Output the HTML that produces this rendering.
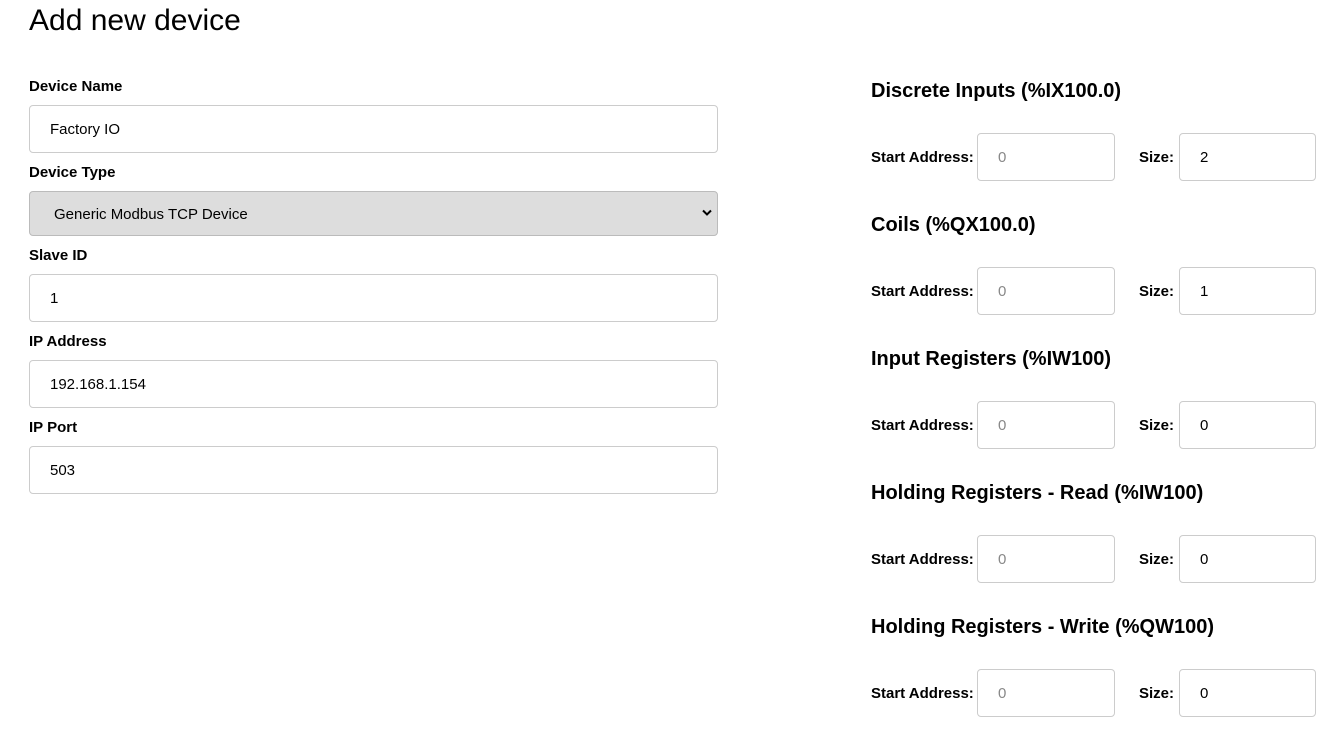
<!DOCTYPE html>
<html><head><style>
body{margin:0;width:1328px;height:738px;background:#fff;font-family:"Liberation Sans",sans-serif;color:#000;position:relative;overflow:hidden}
.a{position:absolute}
h1{position:absolute;left:29px;top:4px;margin:0;font-size:30px;font-weight:normal}
.lbl{position:absolute;left:29px;font-size:15px;font-weight:bold}
.in{position:absolute;box-sizing:border-box;border:1px solid #ccc;border-radius:4px;background:#fff;font-size:15px;padding-left:20px;display:flex;align-items:center}
.sel{background:#ddd;border-color:#bbb}
.h{position:absolute;left:871px;font-size:20px;font-weight:bold}
.sl{position:absolute;font-size:15px;font-weight:bold}
.g{color:#888}
</style></head><body>
<h1>Add new device</h1>
<div class="lbl" style="top:78px">Device Name</div>
<div class="in" style="left:29px;top:105px;width:689px;height:48px">Factory IO</div>
<div class="lbl" style="top:164px">Device Type</div>
<div class="in sel" style="left:29px;top:191px;width:689px;height:45px;padding-left:24px;padding-top:1px">Generic Modbus TCP Device
<svg class="a" style="right:5px;top:17px" width="10" height="8" viewBox="0 0 10 8"><path d="M1 1.5L5 5.5L9 1.5" stroke="#000" stroke-width="2" fill="none"/></svg></div>
<div class="lbl" style="top:247px">Slave ID</div>
<div class="in" style="left:29px;top:274px;width:689px;height:48px">1</div>
<div class="lbl" style="top:333px">IP Address</div>
<div class="in" style="left:29px;top:360px;width:689px;height:48px">192.168.1.154</div>
<div class="lbl" style="top:419px">IP Port</div>
<div class="in" style="left:29px;top:446px;width:689px;height:48px">503</div>

<div class="h" style="top:80px">Discrete Inputs (%IX100.0)</div>
<div class="sl" style="left:871px;top:149px">Start Address:</div>
<div class="in g" style="left:977px;top:133px;width:138px;height:48px">0</div>
<div class="sl" style="left:1139px;top:149px">Size:</div>
<div class="in" style="left:1179px;top:133px;width:137px;height:48px">2</div>

<div class="h" style="top:214px">Coils (%QX100.0)</div>
<div class="sl" style="left:871px;top:283px">Start Address:</div>
<div class="in g" style="left:977px;top:267px;width:138px;height:48px">0</div>
<div class="sl" style="left:1139px;top:283px">Size:</div>
<div class="in" style="left:1179px;top:267px;width:137px;height:48px">1</div>

<div class="h" style="top:348px">Input Registers (%IW100)</div>
<div class="sl" style="left:871px;top:417px">Start Address:</div>
<div class="in g" style="left:977px;top:401px;width:138px;height:48px">0</div>
<div class="sl" style="left:1139px;top:417px">Size:</div>
<div class="in" style="left:1179px;top:401px;width:137px;height:48px">0</div>

<div class="h" style="top:482px">Holding Registers - Read (%IW100)</div>
<div class="sl" style="left:871px;top:551px">Start Address:</div>
<div class="in g" style="left:977px;top:535px;width:138px;height:48px">0</div>
<div class="sl" style="left:1139px;top:551px">Size:</div>
<div class="in" style="left:1179px;top:535px;width:137px;height:48px">0</div>

<div class="h" style="top:616px">Holding Registers - Write (%QW100)</div>
<div class="sl" style="left:871px;top:685px">Start Address:</div>
<div class="in g" style="left:977px;top:669px;width:138px;height:48px">0</div>
<div class="sl" style="left:1139px;top:685px">Size:</div>
<div class="in" style="left:1179px;top:669px;width:137px;height:48px">0</div>
</body></html>
